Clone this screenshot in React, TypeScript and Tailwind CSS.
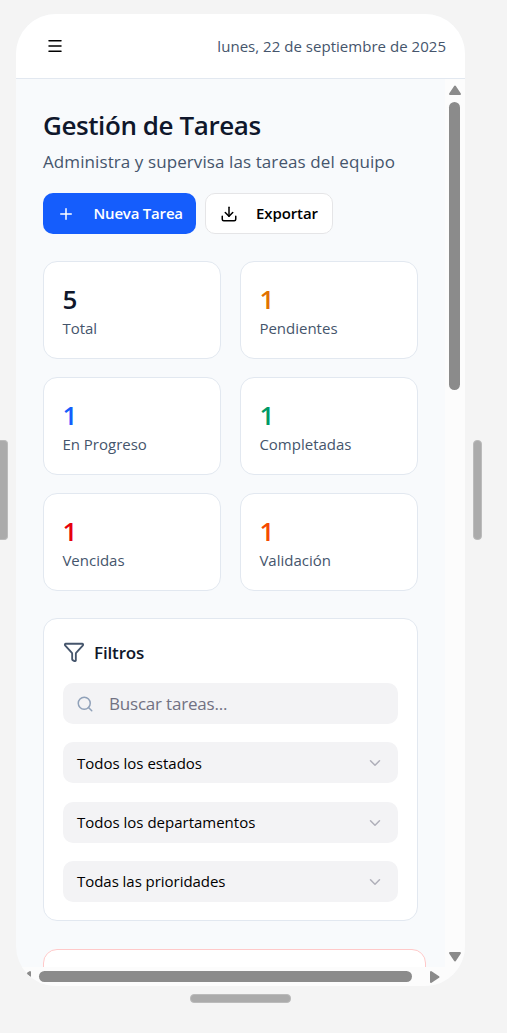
import React from 'react';
import { ChevronDown, Download, Funnel, Menu, Plus, Search } from 'lucide-react';

const stats = [
  { value: 5, label: 'Total', color: 'text-[#0f172b]' },
  { value: 1, label: 'Pendientes', color: 'text-[#e17100]' },
  { value: 1, label: 'En Progreso', color: 'text-[#155dfc]' },
  { value: 1, label: 'Completadas', color: 'text-[#009966]' },
  { value: 1, label: 'Vencidas', color: 'text-[#e7000b]' },
  { value: 1, label: 'Validación', color: 'text-[#f54900]' },
];

const selects = [
  { label: 'Todos los estados', cls: 'mt-[18px] leading-[23px]', text: 'pt-px' },
  { label: 'Todos los departamentos', cls: 'mt-[19px] leading-[23px]', text: '' },
  { label: 'Todas las prioridades', cls: 'mt-[18px] leading-[23px] tracking-[-0.04px]', text: '' },
];

function Header() {
  return (
    <header className="flex h-[65px] shrink-0 items-center justify-between border-b border-[#e2e8f0] bg-white pr-[19px] pl-[30px]">
      <button aria-label="Menú">
        <Menu className="size-[18px] text-black" strokeWidth={2} />
      </button>
      <span className="text-[15px] tracking-[0.03px] text-[#45556c]">lunes, 22 de septiembre de 2025</span>
    </header>
  );
}

function Stat({ value, label, color }: { value: number; label: string; color: string }) {
  return (
    <div className="flex h-[98px] flex-col rounded-[14px] border border-[#e2e8f0] bg-white pt-[22px] pl-[18.4px]">
      <span className={`h-[31px] text-[26px] leading-[30px] font-semibold ${color}`}>{value}</span>
      <span className="text-[15px] leading-[26px] text-[#45556c]">{label}</span>
    </div>
  );
}

function Filters() {
  return (
    <section className="mt-[27px] h-[303px] w-[375px] rounded-[14px] border border-[#e2e8f0] bg-white px-[19px] pt-[21px]">
      <div className="flex h-6 items-center gap-[9px]">
        <Funnel className="mb-px size-[22px] text-[#45556c]" strokeWidth={2} />
        <h2 className="pt-[2px] text-[17px] font-semibold tracking-[-0.15px] text-[#0f172b]">Filtros</h2>
      </div>
      <div className="mt-[19px] flex h-[41px] items-center rounded-[10px] bg-[#f3f3f5] pl-[13px]">
        <Search className="size-[18px] text-[#90a1b9]" />
        <span className="ml-[15px] pt-px text-[17px] tracking-[-0.2px] text-[#717182]">Buscar tareas...</span>
      </div>
      {selects.map((s) => (
        <div
          key={s.label}
          className={`flex h-[41px] items-center justify-between rounded-[10px] bg-[#f3f3f5] pr-[14px] pl-[14px] text-[15px] text-black ${s.cls}`}
        >
          <span className={s.text}>{s.label}</span>
          <ChevronDown className="size-[18px] text-[#b0b0ba]" />
        </div>
      ))}
    </section>
  );
}

function VerticalScrollbar() {
  return (
    <div className="flex w-5 shrink-0 flex-col items-center bg-[#fcfcfc] pt-[6px] pb-[5px]">
      <svg className="mr-px h-[11px] w-[14px]" viewBox="0 0 14 11">
        <path d="M7 1.5 12 9H2Z" fill="#8b8b8b" stroke="#8b8b8b" strokeWidth="2" strokeLinejoin="round" />
      </svg>
      <div className="mt-[6px] mr-px h-[288px] w-[11px] rounded-full bg-[#8b8b8b]" />
      <svg className="mt-auto mr-px h-[11px] w-[14px]" viewBox="0 0 14 11">
        <path d="M7 9.5 12 2H2Z" fill="#8b8b8b" stroke="#8b8b8b" strokeWidth="2" strokeLinejoin="round" />
      </svg>
    </div>
  );
}

function HorizontalScrollbar() {
  return (
    <div className="flex h-[19px] shrink-0 items-center bg-[#fcfcfc] pl-[5px]">
      <svg className="h-[14px] w-[10px]" viewBox="0 0 10 14">
        <path d="M1.5 7 9 2V12Z" fill="#8b8b8b" stroke="#8b8b8b" strokeWidth="2" strokeLinejoin="round" />
      </svg>
      <div className="ml-2 h-[11px] w-[373px] rounded-full bg-[#8b8b8b]" />
      <svg className="ml-[18px] h-[14px] w-[10px]" viewBox="0 0 10 14">
        <path d="M8.5 7 1 2V12Z" fill="#8b8b8b" stroke="#8b8b8b" strokeWidth="2" strokeLinejoin="round" />
      </svg>
    </div>
  );
}

export default function App() {
  return (
    <div className="flex h-[1033px] w-[507px] flex-col overflow-hidden bg-[#f4f4f4] pt-[14px] font-['Open_Sans','Noto_Sans',sans-serif]">
      <div className="flex h-[972px] items-center">
        <div className="mt-[-20px] mr-[8px] h-[100px] w-2 rounded-r-[4px] border border-l-0 border-[#bbbbbb] bg-[#ababab]" />
        <div className="flex h-[972px] w-[449px] shrink-0 flex-col overflow-hidden rounded-[40px] bg-[#f8fafc]">
          <Header />
          <div className="flex min-h-0 flex-1">
            <main className="flex min-w-0 flex-1 flex-col overflow-hidden pt-[29px] pl-[27px]">
              <h1 className="h-[37px] shrink-0 text-[26px] leading-[34px] font-semibold tracking-[-0.42px] whitespace-nowrap text-[#0f172b]">Gestión de Tareas</h1>
              <p className="h-7 shrink-0 text-[17px] leading-[34px] tracking-[0.09px] whitespace-nowrap text-[#45556c]">Administra y supervisa las tareas del equipo</p>
              <div className="mt-5 flex h-[41px] shrink-0 gap-[9px] text-[15px] font-semibold">
                <button className="flex w-[153px] items-center rounded-[10px] bg-[#155dfc] pl-[14px] text-white">
                  <Plus className="size-[18px]" />
                  <span className="ml-[18.5px] tracking-[-0.2px]">Nueva Tarea</span>
                </button>
                <button className="flex w-[128px] items-center rounded-[10px] border border-[#e5e5e7] bg-white pl-[14px] text-black">
                  <Download className="size-[18px]" />
                  <span className="ml-[18px] tracking-[-0.1px]">Exportar</span>
                </button>
              </div>
              <div className="mt-[27px] grid w-[375px] shrink-0 grid-cols-[178px_178px] gap-x-[19px] gap-y-[18px]">
                {stats.map((s) => (
                  <Stat key={s.label} {...s} />
                ))}
              </div>
              <div className="shrink-0">
                <Filters />
              </div>
              <div className="mt-7 h-[60px] w-[383px] shrink-0 rounded-[14px] border border-[#ffc9c9] bg-white" />
            </main>
            <VerticalScrollbar />
          </div>
          <HorizontalScrollbar />
        </div>
        <div className="mt-[-20px] ml-[8px] h-[100px] w-[9px] rounded-[4px] border border-[#bbbbbb] bg-[#ababab]" />
      </div>
      <div className="mt-2 ml-[190px] h-[9px] w-[101px] rounded-[4px] border border-[#bbbbbb] bg-[#ababab]" />
    </div>
  );
}
